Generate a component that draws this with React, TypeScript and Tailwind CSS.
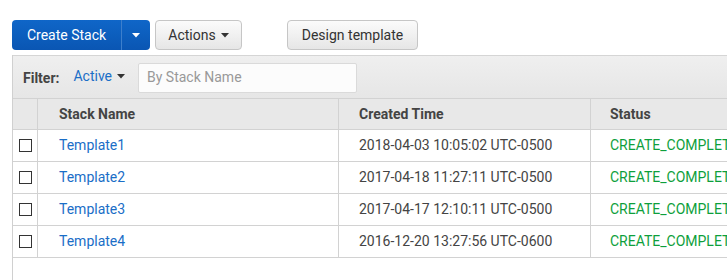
import React from 'react';

const rows = [
  { name: 'Template1', created: '2018-04-03 10:05:02 UTC-0500', status: 'CREATE_COMPLETE' },
  { name: 'Template2', created: '2017-04-18 11:27:11 UTC-0500', status: 'CREATE_COMPLETE' },
  { name: 'Template3', created: '2017-04-17 12:10:11 UTC-0500', status: 'CREATE_COMPLETE' },
  { name: 'Template4', created: '2016-12-20 13:27:56 UTC-0600', status: 'CREATE_COMPLETE' },
];

const Caret = ({ className = '' }: { className?: string }) => (
  <svg width="8" height="5" viewBox="0 0 8 5" className={className}>
    <path d="M0 0h8L4 4.5z" fill="currentColor" />
  </svg>
);

const App: React.FC = () => {
  return (
    <div className="w-[727px] h-[280px] overflow-hidden bg-white text-[14px] text-[#333]" style={{ fontFamily: 'Roboto, "Liberation Sans", sans-serif' }}>
      <div className="flex items-center h-[55px] pl-[12px] pt-[20px] pb-[5px]">
        <div className="flex h-[30px] rounded-[4px] bg-gradient-to-b from-[#0f66c8] to-[#0a56b3] text-white">
          <button className="w-[109px] h-full text-[14px]">Create Stack</button>
          <button className="w-[29px] h-full border-l border-[#3d7fcc] flex items-center justify-center">
            <Caret />
          </button>
        </div>
        <button className="ml-[5px] w-[87px] h-[30px] rounded-[4px] border border-[#c6c6c6] bg-gradient-to-b from-[#fbfbfb] to-[#e6e6e6] flex items-center justify-center gap-[5px] text-[#333]">
          Actions <Caret />
        </button>
        <button className="ml-[45px] w-[131px] h-[30px] rounded-[4px] border border-[#c6c6c6] bg-gradient-to-b from-[#fbfbfb] to-[#e6e6e6] text-[#333]">
          Design template
        </button>
      </div>
      <div className="ml-[12px] border-l border-[#d0d0d0]">
        <div className="h-[43px] flex items-center border-t border-[#d5d5d5] bg-gradient-to-b from-[#efefef] to-[#e6e6e6] pl-[10px]">
          <span className="font-bold text-[14px] text-[#444] mt-[3px]">Filter:</span>
          <span className="ml-[14px] text-[#1a6ec7] flex items-center gap-[5px] -mt-[1px]">
            Active <Caret className="text-[#333]" />
          </span>
          <div className="ml-[13px] w-[219px] h-[30px] mt-[1px] bg-[#fcfcfc] border border-[#dadada] rounded-[2px] flex items-center px-[8px] text-[#999] text-[14px]">
            By Stack Name
          </div>
        </div>
        <div className="w-[900px]">
          <div className="flex h-[32px] bg-[#e8e8e8] border-t border-b border-[#d2d2d2] font-bold text-[#444]">
            <div className="w-[25px] border-r border-[#d2d2d2]" />
            <div className="w-[301px] border-r border-[#d2d2d2] pl-[21px] flex items-center">Stack Name</div>
            <div className="w-[252px] border-r border-[#d2d2d2] pl-[20px] flex items-center">Created Time</div>
            <div className="flex-1 pl-[19px] flex items-center">Status</div>
          </div>
          {rows.map((r) => (
            <div key={r.name} className="flex h-[32px] border-b border-[#d2d2d2]">
              <div className="w-[25px] border-r border-[#d2d2d2] flex items-center justify-center">
                <div className="w-[13px] h-[13px] border border-[#333] bg-white" />
              </div>
              <div className="w-[301px] border-r border-[#d2d2d2] pl-[21px] flex items-center text-[#1a6ec7]">{r.name}</div>
              <div className="w-[252px] border-r border-[#d2d2d2] pl-[20px] flex items-center text-[#444]">{r.created}</div>
              <div className="flex-1 pl-[19px] flex items-center text-[#0e9f3c]">{r.status}</div>
            </div>
          ))}
          <div className="h-[30px]" />
        </div>
      </div>
    </div>
  );
};

export default App;
